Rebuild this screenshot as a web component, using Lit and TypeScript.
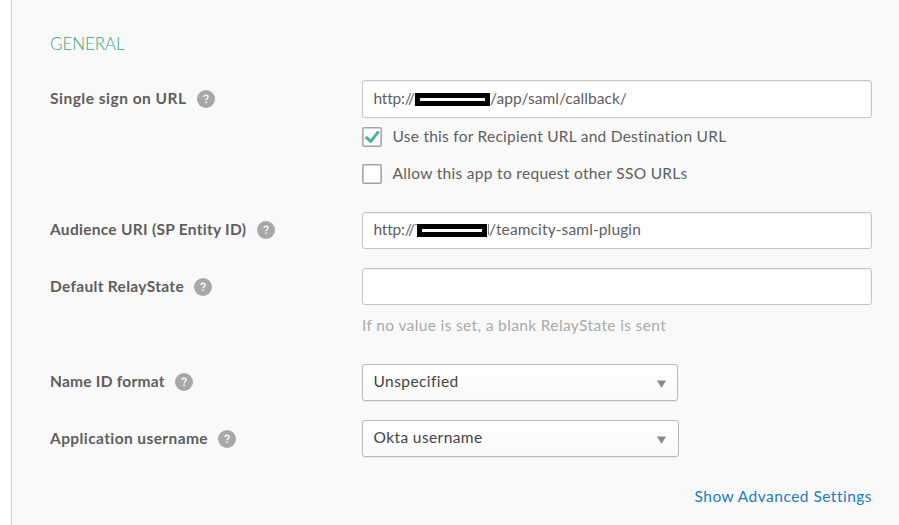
import { LitElement, html, css, TemplateResult } from "lit";
import { customElement } from "lit/decorators.js";

const text = (value: string, spacing: number) =>
  html`<span class="text" style="letter-spacing:${spacing}px">${value}</span>`;

const label = (value: string, spacing: number) => html`
  <div class="label">
    ${text(value, spacing)}
    <svg class="help" viewBox="0 0 18 18">
      <circle cx="9" cy="9" r="9" fill="#a7a7a7" />
      <path d="M6.9 6.9C7 5.7 7.8 5.2 9 5.2c1.3 0 2.1.7 2.1 1.7 0 1.5-2 1.6-2 3.3" fill="none" stroke="#f9f9f9" stroke-width="1.4" />
      <rect x="8.3" y="11.5" width="1.6" height="1.6" fill="#f9f9f9" />
    </svg>
  </div>`;

const check = (on: boolean, value: string, spacing: number) => html`
  <div class="check">
    <svg class="box" viewBox="0 0 20 20">
      <rect x="0.8" y="0.8" width="18.4" height="18.4" rx="1.5" fill="#fff" stroke="#a2a2a2" stroke-width="1.5" />
      ${on ? html`<svg viewBox="0 0 20 20"><path d="M3.6 9.8l5.2 4.6 7.8-10" fill="none" stroke="#4cb396" stroke-width="3" /></svg>` : ""}
    </svg>
    ${text(value, spacing)}
  </div>`;

const select = (cls: string, value: string, spacing: number) => html`
  <div class="select ${cls}">
    ${text(value, spacing)}
    <svg class="arrow" viewBox="0 0 9 8"><path d="M0 .5h9L4.8 7.5h-.6z" fill="#888" /></svg>
  </div>`;

@customElement("app-root")
export class AppRoot extends LitElement {
  static styles = css`
    :host {
      display: block;
      height: 525px;
      overflow: hidden;
      background: #fff;
      font: 15.5px/20px Lato, "Open Sans", sans-serif;
      font-variant-ligatures: none;
      color: #5e5e5e;
    }
    * { box-sizing: border-box; }
    .panel {
      height: 525px;
      margin-left: 11px;
      border-left: 1px solid #d2d2d2;
      background: #f9f9f9;
      padding: 34px 27px 0 38px;
    }
    h2 {
      margin: 0 0 26px;
      height: 20px;
      font-size: 17px;
      line-height: 20px;
      font-weight: 300;
      letter-spacing: -0.1px;
      color: #34a686;
    }
    .row { display: grid; grid-template-columns: 312px 510px; }
    .label {
      display: flex;
      align-items: center;
      gap: 10.5px;
      height: 38px;
      font-weight: 700;
      white-space: nowrap;
    }
    .label .text, .input .text, .check .text { margin-bottom: 2px; }
    .uri .label, .format .label { height: 36px; }
    .help { width: 18px; height: 18px; flex: none; }
    .input {
      display: flex;
      align-items: center;
      height: 37px;
      padding-left: 10.5px;
      border: 1px solid #c6c6c6;
      border-radius: 3px;
      background: #fff;
      box-shadow: inset 0 1px 2px #eee;
      white-space: nowrap;
    }
    .tall { height: 38px; }
    .scheme { display: flex; width: 41.5px; }
    .redacted {
      height: 13px;
      border: 5px solid #000;
      background: #fff;
    }
    .long { width: 75px; }
    .short { width: 70px; margin: 0 2px; position: relative; }
    .short::before, .short::after {
      content: "";
      position: absolute;
      background: #858585;
    }
    .short::before { left: -7px; top: -5px; width: 2px; height: 1px; }
    .short::after { right: -7px; top: -5px; width: 1px; height: 11px; }
    .check { display: flex; align-items: center; gap: 10.5px; height: 20px; margin-top: 8.5px; white-space: nowrap; }
    .check + .check { margin-top: 17px; }
    .box { width: 20px; height: 20px; flex: none; }
    .sso { height: 132px; }
    .uri { height: 56px; }
    .uri .input .text { margin-bottom: 3px; }
    .relay { height: 96px; }
    .format { height: 56px; }
    .user { height: 66px; }
    .hint { margin-top: 10px; color: #aaa; }
    .select {
      display: flex;
      align-items: center;
      justify-content: space-between;
      height: 37px;
      width: 316px;
      padding: 0 11px 0 10.5px;
      border: 1px solid #bbb;
      border-radius: 3px;
      background: linear-gradient(#fff, #f9f9f9);
      box-shadow: 0 1px 1px #e8e8e8;
      color: #444;
    }
    .select .text { margin-bottom: 3px; }
    .wide { width: 317px; padding-right: 12px; }
    .arrow { width: 9px; height: 8px; margin-top: 2px; }
    .more { text-align: right; color: #1c7cb9; }
  `;

  render(): TemplateResult {
    return html`
      <div class="panel">
        <h2>GENERAL</h2>
        <div class="row sso">
          ${label("Single sign on URL", 0.5)}
          <div>
            <div class="input tall">
              <span class="scheme">${text("http://", -0.2)}</span>
              <span class="redacted long"></span>
              ${text("/app/saml/callback/", 0.05)}
            </div>
            ${check(true, "Use this for Recipient URL and Destination URL", 0.25)}
            ${check(false, "Allow this app to request other SSO URLs", 0.31)}
          </div>
        </div>
        <div class="row uri">
          ${label("Audience URI (SP Entity ID)", 0.28)}
          <div class="input">
            <span class="scheme">${text("http://", -0.2)}</span>
            <span class="redacted short"></span>
            ${text("/teamcity-saml-plugin", 0.12)}
          </div>
        </div>
        <div class="row relay">
          ${label("Default RelayState", 0.31)}
          <div>
            <div class="input"></div>
            <div class="hint">${text("If no value is set, a blank RelayState is sent", 0.36)}</div>
          </div>
        </div>
        <div class="row format">
          ${label("Name ID format", 0.24)}
          ${select("", "Unspecified", 0.42)}
        </div>
        <div class="row user">
          ${label("Application username", 0.4)}
          ${select("wide", "Okta username", 0.4)}
        </div>
        <div class="more">${text("Show Advanced Settings", 0.48)}</div>
      </div>
    `;
  }
}
